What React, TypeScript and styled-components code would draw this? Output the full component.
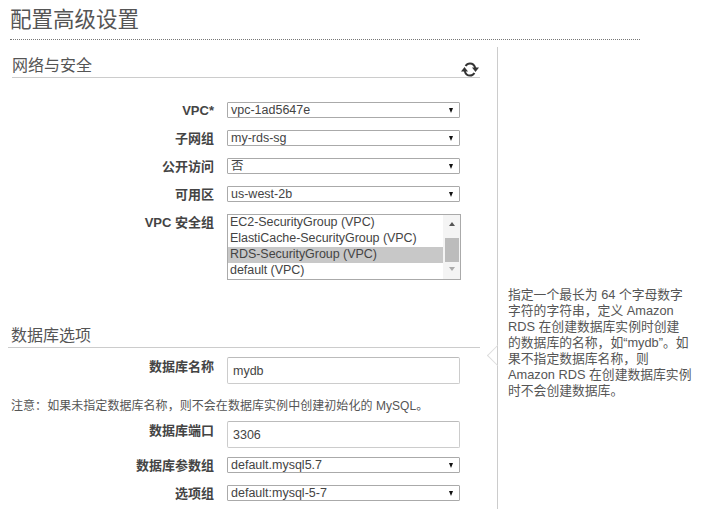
import React from "react";
import styled, { createGlobalStyle } from "styled-components";

const Global = createGlobalStyle`
  html, body { margin: 0; padding: 0; background: #fff; }
  body { font-family: "Liberation Sans", "Noto Sans CJK SC", sans-serif; color: #444; height: 509px; overflow: hidden; }
`;

const Page = styled.div`
  width: 713px;
  height: 509px;
  overflow: hidden;
  padding: 6px 0 0 10px;
  box-sizing: border-box;
`;

const PageTitle = styled.h1`
  width: 630px;
  box-sizing: border-box;
  height: 34px;
  margin: 0;
  font-size: 21.5px;
  line-height: 28px;
  font-weight: 400;
  color: #555;
  border-bottom: 1px dotted #777;
`;

const Columns = styled.div`
  display: flex;
  margin-top: 7px;
  height: 470px;
`;

const Main = styled.div`
  width: 488px;
  box-sizing: border-box;
  border-right: 1px solid #ccc;
`;

const SectionHead = styled.div`
  width: 468px;
  margin-left: 2px;
  height: 31px;
  box-sizing: border-box;
  display: flex;
  justify-content: space-between;
  align-items: flex-end;
  border-bottom: 1px solid #ccc;
  margin-bottom: 24px;
`;

const DbHead = styled(SectionHead)`
  width: 472px;
  margin-left: -2px;
  padding-left: 3px;
  margin-top: 43px;
  height: 25px;
  margin-bottom: 9px;
`;

const SectionTitle = styled.h2`
  margin: 0;
  font-size: 16px;
  line-height: 22px;
  font-weight: 400;
  color: #555;
`;

const RefreshIcon = styled.svg`
  width: 20px;
  height: 17px;
  display: block;
  margin-bottom: -1px;
`;

const Row = styled.div<{ $gap: number }>`
  display: flex;
  margin-bottom: ${(p) => p.$gap}px;
`;

const Label = styled.div<{ $top?: number }>`
  width: 204px;
  height: 16px;
  flex: none;
  text-align: right;
  font-size: 13px;
  line-height: 18px;
  font-weight: 700;
  color: #444;
  margin-right: 13px;
  padding-top: ${(p) => p.$top ?? 0}px;
`;

const SelectBox = styled.div`
  width: 233px;
  height: 16px;
  box-sizing: border-box;
  border: 1px solid #aaa;
  border-radius: 1px;
  padding: 0 6px 0 3px;
  display: flex;
  align-items: center;
  justify-content: space-between;
  font-size: 12.5px;
  line-height: 14px;
  color: #444;
  background: #fff;
`;

const Caret = styled.span`
  width: 0;
  height: 0;
  border-left: 2.5px solid transparent;
  border-right: 2.5px solid transparent;
  border-top: 5px solid #111;
`;

const ListBox = styled.div`
  width: 234px;
  height: 66px;
  box-sizing: border-box;
  border: 1px solid #aaa;
  display: flex;
  background: #fff;
`;

const Options = styled.div`
  flex: 1;
`;

const Option = styled.div<{ $selected?: boolean }>`
  height: 16px;
  line-height: 15px;
  padding-left: 2px;
  font-size: 12.5px;
  letter-spacing: -0.05px;
  white-space: nowrap;
  color: #444;
  background: ${(p) => (p.$selected ? "#c8c8c8" : "transparent")};
`;

const ScrollBar = styled.div`
  width: 17px;
  display: flex;
  flex-direction: column;
  align-items: center;
  background: #f4f4f4;
`;

const ScrollArrow = styled.span<{ $up?: boolean }>`
  width: 0;
  height: 0;
  margin: ${(p) => (p.$up ? "7px 0 12px" : "5px 0 0")};
  border-left: 3.5px solid transparent;
  border-right: 3.5px solid transparent;
  ${(p) => (p.$up ? "border-bottom: 4px solid #555;" : "border-top: 4px solid #aaa;")}
`;

const ScrollThumb = styled.div`
  width: 14px;
  height: 24px;
  flex: none;
  background: #bcbcbc;
`;

const TextBox = styled.div`
  width: 233px;
  height: 27px;
  box-sizing: border-box;
  border: 1px solid #ccc;
  border-top-color: #bbb;
  border-radius: 2px;
  padding: 0 5px;
  display: flex;
  align-items: center;
  font-size: 12.5px;
  color: #444;
`;

const Note = styled.p`
  margin: 0 0 6px 1px;
  font-size: 12px;
  line-height: 18px;
  letter-spacing: 0.05px;
  white-space: nowrap;
  color: #555;
`;

const Aside = styled.aside`
  position: relative;
  width: 196px;
  padding: 240px 0 0 10px;
  box-sizing: border-box;
`;

const Help = styled.div`
  font-size: 12.8px;
  line-height: 16px;
  color: #555;
`;

const HelpLine = styled.div`
  white-space: nowrap;
`;

const Pointer = styled.span`
  position: absolute;
  left: -8px;
  top: 301px;
  width: 14px;
  height: 14px;
  border-left: 1px solid #ddd;
  border-bottom: 1px solid #ddd;
  transform: rotate(45deg);
`;

const helpLines = [
  "指定一个最长为 64 个字母数字",
  "字符的字符串，定义 Amazon",
  "RDS 在创建数据库实例时创建",
  "的数据库的名称，如“mydb”。如",
  "果不指定数据库名称，则",
  "Amazon RDS 在创建数据库实例",
  "时不会创建数据库。",
];

const App = () => (
  <Page>
    <Global />
    <PageTitle>配置高级设置</PageTitle>
    <Columns>
      <Main>
        <SectionHead>
          <SectionTitle>网络与安全</SectionTitle>
          <RefreshIcon viewBox="0 0 20 17" fill="none">
            <path d="M5.6 5C6.6 3.2 8.2 2.4 10 2.4C12.4 2.4 14.4 3.8 15.3 7" stroke="#333" strokeWidth="2" />
            <path d="M14.4 12C13.4 13.8 11.8 14.6 10 14.6C7.6 14.6 5.6 13.2 4.7 10" stroke="#333" strokeWidth="2" />
            <path d="M12 6.6h7l-3.5 4.4z" fill="#333" />
            <path d="M1 10.4h7L4.5 6z" fill="#333" />
          </RefreshIcon>
        </SectionHead>
        <Row $gap={12}>
          <Label>VPC*</Label>
          <SelectBox>vpc-1ad5647e<Caret /></SelectBox>
        </Row>
        <Row $gap={12}>
          <Label>子网组</Label>
          <SelectBox>my-rds-sg<Caret /></SelectBox>
        </Row>
        <Row $gap={12}>
          <Label>公开访问</Label>
          <SelectBox>否<Caret /></SelectBox>
        </Row>
        <Row $gap={12}>
          <Label>可用区</Label>
          <SelectBox>us-west-2b<Caret /></SelectBox>
        </Row>
        <Row $gap={0}>
          <Label>VPC 安全组</Label>
          <ListBox>
            <Options>
              <Option>EC2-SecurityGroup (VPC)</Option>
              <Option>ElastiCache-SecurityGroup (VPC)</Option>
              <Option $selected>RDS-SecurityGroup (VPC)</Option>
              <Option>default (VPC)</Option>
            </Options>
            <ScrollBar>
              <ScrollArrow $up />
              <ScrollThumb />
              <ScrollArrow />
            </ScrollBar>
          </ListBox>
        </Row>
        <DbHead>
          <SectionTitle>数据库选项</SectionTitle>
        </DbHead>
        <Row $gap={13}>
          <Label $top={1}>数据库名称</Label>
          <TextBox>mydb</TextBox>
        </Row>
        <Note>注意：如果未指定数据库名称，则不会在数据库实例中创建初始化的 MySQL。</Note>
        <Row $gap={9}>
          <Label $top={1}>数据库端口</Label>
          <TextBox>3306</TextBox>
        </Row>
        <Row $gap={12}>
          <Label>数据库参数组</Label>
          <SelectBox>default.mysql5.7<Caret /></SelectBox>
        </Row>
        <Row $gap={0}>
          <Label>选项组</Label>
          <SelectBox>default:mysql-5-7<Caret /></SelectBox>
        </Row>
      </Main>
      <Aside>
        <Pointer />
        <Help>
          {helpLines.map((line) => (
            <HelpLine key={line}>{line}</HelpLine>
          ))}
        </Help>
      </Aside>
    </Columns>
  </Page>
);

export default App;
